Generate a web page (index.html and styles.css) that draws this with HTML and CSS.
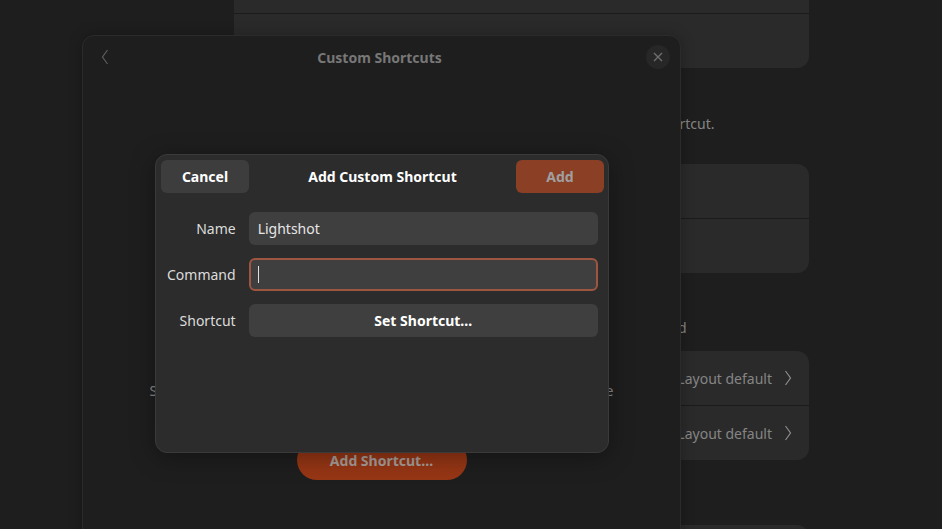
FILE: index.html
```html
<!DOCTYPE html>
<html lang="en">
<head>
<meta charset="utf-8">
<title>Custom Shortcuts</title>
<link rel="stylesheet" href="styles.css">
</head>
<body>
<div class="screen">
  <main class="settings">
    <section class="card">
      <div class="row"><span class="row-title">English (US)</span></div>
      <div class="row"><span class="row-title">+ Add Input Source…</span></div>
    </section>

    <section class="group group-switch">
      <div class="group-title">Input Source Switching</div>
      <div class="group-desc">Input sources can be switched using the Super+Space keyboard shortcut.</div>
    </section>
    <section class="card card-switch">
      <div class="row"><span class="row-title">Use the same source for all windows</span></div>
      <div class="row"><span class="row-title">Switch input sources individually for each window</span></div>
    </section>

    <section class="group group-special">
      <div class="group-title">Special Character Entry</div>
      <div class="group-desc">Methods for entering symbols and letter variants using the keyboard</div>
    </section>
    <section class="card card-special">
      <div class="row">
        <span class="row-title">Alternate Characters Key</span>
        <span class="row-value">Layout default</span>
        <svg class="chev" width="8" height="16" viewBox="0 0 8 16"><polyline points="1.5,1 6.5,8 1.5,15" fill="none" stroke="#8c8c8c" stroke-width="1.2"/></svg>
      </div>
      <div class="row">
        <span class="row-title">Compose Key</span>
        <span class="row-value">Layout default</span>
        <svg class="chev" width="8" height="16" viewBox="0 0 8 16"><polyline points="1.5,1 6.5,8 1.5,15" fill="none" stroke="#8c8c8c" stroke-width="1.2"/></svg>
      </div>
    </section>

    <section class="group group-keys">
      <div class="group-title">Keyboard Shortcuts</div>
    </section>
    <section class="card card-keys">
      <div class="row"><span class="row-title">View and Customize Shortcuts</span></div>
    </section>
  </main>

  <div class="dialog">
    <header class="dialog-head">
      <button class="icon-btn back" aria-label="Back">
        <svg width="8" height="16" viewBox="0 0 8 16"><polyline points="6.5,1 1.5,8 6.5,15" fill="none" stroke="#5e5e5e" stroke-width="1.2"/></svg>
      </button>
      <h1 class="dialog-title">Custom Shortcuts</h1>
      <button class="icon-btn close" aria-label="Close">
        <svg width="10" height="10" viewBox="0 0 10 10"><path d="M1 1 L9 9 M9 1 L1 9" stroke="#6e6e6e" stroke-width="1.4" fill="none"/></svg>
      </button>
    </header>
    <div class="dialog-body">
      <p class="empty-desc">Set up custom shortcuts for launching apps, running scripts, and more</p>
      <button class="pill">Add Shortcut…</button>
    </div>

    <div class="modal">
      <div class="modal-head">
        <button class="btn cancel">Cancel</button>
        <div class="modal-title">Add Custom Shortcut</div>
        <button class="btn add">Add</button>
      </div>
      <div class="form">
        <label class="label">Name</label>
        <div class="entry">Lightshot</div>
        <label class="label">Command</label>
        <div class="entry focused"><span class="caret"></span></div>
        <label class="label">Shortcut</label>
        <button class="entry set-btn">Set Shortcut…</button>
      </div>
    </div>
  </div>
</div>
</body>
</html>
```

FILE: styles.css
```css
* { box-sizing: border-box; }
html, body {
  margin: 0;
  padding: 0;
  width: 942px;
  height: 529px;
  overflow: hidden;
  background: #1e1e1e;
  font-family: "Noto Sans", "DejaVu Sans", sans-serif;
  font-size: 14px;
  color: #dcdcdc;
}
button { font-family: inherit; font-size: inherit; border: none; cursor: default; }

.screen {
  position: relative;
  width: 942px;
  height: 529px;
  overflow: hidden;
}

/* Background settings page */
.settings {
  width: 575px;
  margin: -41px 0 0 234px;
  display: flex;
  flex-direction: column;
}
.card {
  background: #2a2a2a;
  border-radius: 12px;
  display: flex;
  flex-direction: column;
  overflow: hidden;
}
.row {
  height: 54px;
  display: flex;
  align-items: center;
  padding: 0 17px 0 16px;
  color: #8a8a8a;
}
.row + .row { border-top: 1px solid #1b1b1b; height: 55px; }
.row-title { flex: 1; color: #9a9a9a; }
.row-value { color: #858585; margin-right: 12px; }
.chev { display: block; }

.group { display: flex; flex-direction: column; gap: 4px; }
.group-title { font-weight: 700; line-height: 20px; color: #8a8a8a; }
.group-desc { line-height: 20px; color: #858585; }
.group-switch { margin-top: 22px; margin-bottom: 30px; }
.group-special { margin-top: 21px; margin-bottom: 13px; }
.group-keys { margin-top: 31px; margin-bottom: 14px; }

/* Custom shortcuts dialog */
.dialog {
  position: absolute;
  left: 82px;
  top: 35px;
  width: 599px;
  height: 540px;
  background: #1e1e1e;
  border: 1px solid #2b2b2b;
  border-radius: 12px;
  box-shadow: 0 0 14px rgba(0,0,0,0.25);
  display: flex;
  flex-direction: column;
}
.dialog-head {
  height: 42px;
  display: flex;
  align-items: center;
  justify-content: space-between;
  padding: 0 10px 0 14px;
}
.icon-btn {
  background: transparent;
  display: flex;
  align-items: center;
  justify-content: center;
  padding: 0;
}
.back { width: 16px; height: 24px; }
.close { width: 24px; height: 24px; border-radius: 50%; background: #272727; }
.dialog-title {
  margin: 0;
  font-size: 14px;
  font-weight: 700;
  color: #777777;
}
.dialog-body {
  flex: 1;
  display: flex;
  flex-direction: column;
  align-items: center;
  padding-top: 303px;
}
.empty-desc {
  margin: 0;
  line-height: 20px;
  color: #8a8a8a;
  white-space: nowrap;
}
.pill {
  margin-top: 39px;
  width: 170px;
  height: 40px;
  border-radius: 20px;
  background: #963615;
  color: #a89f9a;
  font-weight: 700;
}

/* Add custom shortcut modal */
.modal {
  position: absolute;
  left: 72px;
  top: 118px;
  width: 454px;
  height: 299px;
  background: #2c2c2c;
  border: 1px solid #3a3a3a;
  border-radius: 12px;
  box-shadow: 0 4px 24px rgba(0,0,0,0.35);
  padding: 5px 4px 0 5px;
}
.modal-head {
  display: flex;
  align-items: center;
  justify-content: space-between;
  height: 33px;
}
.btn {
  width: 88px;
  height: 33px;
  border-radius: 6px;
  font-weight: 700;
}
.cancel { background: #3d3d3d; color: #ffffff; }
.add { background: #8b3f25; color: #a0a0a0; }
.modal-title { font-weight: 700; color: #ffffff; }

.form {
  display: grid;
  grid-template-columns: auto 1fr;
  column-gap: 13px;
  row-gap: 13px;
  align-items: center;
  padding: 19px 6px 0 6px;
}
.label { text-align: right; color: #dcdcdc; }
.entry {
  height: 33px;
  border-radius: 6px;
  background: #3f3f3f;
  display: flex;
  align-items: center;
  padding: 0 9px;
  color: #e6e6e6;
}
.focused { border: 2px solid #9e5640; padding: 0 7px; }
.caret { width: 1px; height: 17px; background: #e0e0e0; }
.set-btn { justify-content: center; font-weight: 700; color: #ffffff; }
```
